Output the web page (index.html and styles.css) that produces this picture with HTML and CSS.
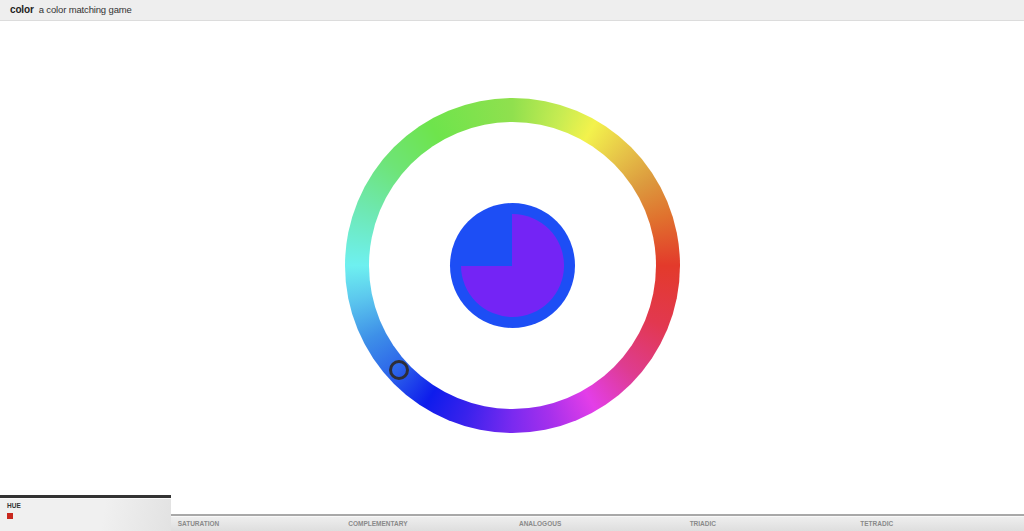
FILE: index.html
```html
<!DOCTYPE html>
<html>
<head>
<meta charset="utf-8">
<title>color</title>
<link rel="stylesheet" href="styles.css">
</head>
<body>
<header class="topbar"><b class="brand">color</b><span class="tagline">a color matching game</span></header>
<main class="stage">
  <div class="wheel">
    <div class="hole">
      <div class="target">
        <div class="pie"></div>
      </div>
    </div>
    <div class="marker"></div>
  </div>
</main>
<footer class="tabs">
  <div class="tab active"><span class="label">HUE</span><span class="swatch"></span></div>
  <div class="tab"><span class="label">SATURATION</span></div>
  <div class="tab"><span class="label">COMPLEMENTARY</span></div>
  <div class="tab"><span class="label">ANALOGOUS</span></div>
  <div class="tab"><span class="label">TRIADIC</span></div>
  <div class="tab"><span class="label">TETRADIC</span></div>
</footer>
</body>
</html>
```
FILE: styles.css
```css
* { box-sizing: border-box; }
html, body { margin: 0; padding: 0; }
body {
  width: 1024px;
  height: 531px;
  overflow: hidden;
  background: #fff;
  font-family: "Liberation Sans", Arial, sans-serif;
  display: flex;
  flex-direction: column;
}
.topbar {
  height: 21px;
  background: #eeeeee;
  border-bottom: 1px solid #dcdcdc;
  font-size: 9.5px;
  letter-spacing: -0.15px;
  line-height: 20px;
  color: #222;
  padding-left: 10px;
  flex: none;
}
.brand { font-weight: bold; margin-right: 5px; font-size: 10px; }
.tagline { color: #333; }
.stage {
  height: 474px;
  flex: none;
  display: flex;
  justify-content: center;
  align-items: flex-start;
  padding-top: 77px;
}
.wheel {
  position: relative;
  width: 335px;
  height: 335px;
  border-radius: 50%;
  padding: 24px;
  background: conic-gradient(
    #90e04e 0deg,
    #c8ec52 18deg,
    #f3f24c 30deg,
    #e6c248 45deg,
    #dc9a3e 58deg,
    #e0722e 72deg,
    #e33a2b 90deg,
    #e23850 112deg,
    #de3c90 132deg,
    #e33ee8 150deg,
    #a630ec 166deg,
    #7a2af0 180deg,
    #3a22ec 197deg,
    #0e1cec 212deg,
    #2c64ea 228deg,
    #3e90e8 243deg,
    #5cc8ee 258deg,
    #6ef0f0 270deg,
    #6ee8b4 290deg,
    #6ee476 310deg,
    #6ee44c 330deg,
    #90e04e 360deg
  );
}
.hole {
  width: 287px;
  height: 287px;
  border-radius: 50%;
  background: #fff;
  display: flex;
  align-items: center;
  justify-content: center;
}
.target {
  width: 125px;
  height: 125px;
  border-radius: 50%;
  background: #1d4ef5;
  display: flex;
  align-items: center;
  justify-content: center;
}
.pie {
  width: 103px;
  height: 103px;
  border-radius: 50%;
  background: conic-gradient(#7424f5 0deg 270deg, transparent 270deg 360deg);
}
.marker {
  position: absolute;
  left: 44px;
  top: 262px;
  width: 20px;
  height: 20px;
  border-radius: 50%;
  border: 3px solid #2e2e38;
}
.tabs {
  flex: 1;
  display: flex;
  align-items: flex-end;
}
.tab {
  width: 170.67px;
  height: 17px;
  border-top: 2px solid #a8a8a8;
  background: linear-gradient(#efefef, #dedede);
  padding: 4px 0 0 7px;
  box-shadow: inset 0 1px 0 #f8f8f8;
}
.tab.active {
  height: 36px;
  border-top: 3px solid #333;
  background: linear-gradient(100deg, #f0f0f0 60%, #e2e2e2);
  padding: 4px 0 0 7px;
  display: flex;
  flex-direction: column;
  gap: 3px;
}
.label {
  display: block;
  font-size: 6.5px;
  font-weight: bold;
  color: #8a8a8a;
  line-height: 8px;
}
.tab.active .label { color: #333; }
.swatch {
  display: block;
  width: 6px;
  height: 6px;
  background: #c8281e;
}
```
